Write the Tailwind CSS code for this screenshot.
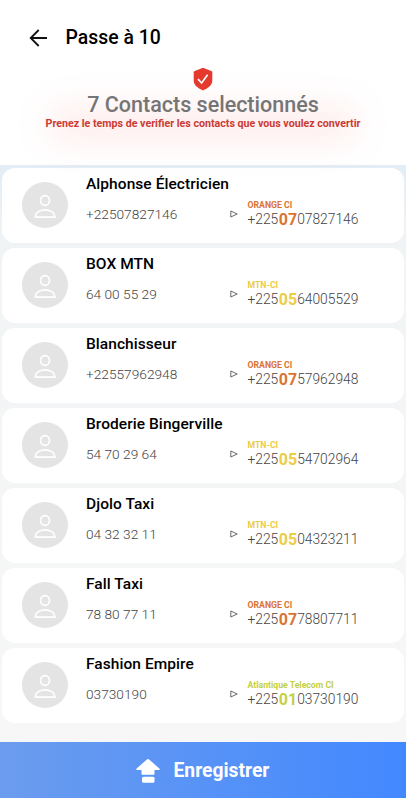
<!DOCTYPE html>
<html lang="fr">
<head>
<meta charset="utf-8">
<title>Passe à 10</title>
<script src="https://cdn.jsdelivr.net/npm/@tailwindcss/browser@4"></script>
</head>
<body class="bg-white">
<div class="w-[406px] h-[800px] overflow-hidden flex flex-col bg-white font-['Roboto',sans-serif]">
  <header class="h-[66px] shrink-0 flex items-center pl-[29px] pt-[9px]">
    <svg class="w-[19px] h-[18px]" viewBox="0 0 19 18" fill="none" stroke="#111" stroke-width="1.8"><path d="M18 9H2M9.7 1L1.7 9l8 8"/></svg>
    <h1 class="ml-[17.500px] text-[19.400px] leading-6 font-medium text-black whitespace-nowrap">Passe à 10</h1>
  </header>
  <section class="h-[99px] shrink-0 flex flex-col items-center">
    <svg class="mt-[1px] w-5 h-6 shrink-0" viewBox="0 0 20 24"><path fill="#e63a2e" d="M10 .8l8.3 3.1q1 .4 1 1.400v8.200c0 4.600-4.500 7.900-9.300 9.900C5.200 21.400.7 18.100.7 13.500V5.300q0-1 1-1.400z"/><path d="M5 12.200l3.600 3.800 6-8.200" fill="none" stroke="#fff" stroke-width="1.700"/></svg>
    <div class="relative mt-[2px] w-[316px] flex flex-col items-center">
      <div class="absolute left-[2px] right-[2px] top-[14px] h-[34px] rounded-[20px] bg-[#f44336]/10 blur-[17px]"></div>
      <h2 class="relative text-[21.500px] leading-6 font-medium text-[#757575] whitespace-nowrap">7 Contacts selectionnés</h2>
      <p class="relative text-[10.670px] leading-[13px] font-bold text-[#cb3a34] whitespace-nowrap">Prenez le temps de verifier les contacts que vous voulez convertir</p>
    </div>
  </section>
  <main id="list" class="h-[577px] shrink-0 bg-linear-to-b from-[#e3edf5] via-[#f1f4f5] via-15% to-[#f7f7f7] px-[2px] pt-[2.500px] flex flex-col gap-[4.500px]"></main>
  <button class="h-[56px] shrink-0 w-full bg-linear-to-r from-[#6b9cee] to-[#4288ff] flex items-center pl-[136px] text-white">
    <svg class="mt-[2px] w-6 h-6" viewBox="0 0 24 24" fill="#fff"><path d="M12 0Q12.700 0 13.400.7L23.600 9.800q.8 1.200-.6 1.200H18.500v3.800q0 1-1 1h-11q-1 0-1-1V11H1Q-.4 11 .4 9.800L10.600.7Q11.300 0 12 0z"/><rect x="6" y="17.700" width="12.500" height="6" rx="1.500"/></svg>
    <span class="mt-[1px] ml-[13.500px] text-[19.300px] leading-6 font-bold">Enregistrer</span>
  </button>
</div>
<script>
const orange = 'text-[#dc7430]', yellow = 'text-[#edcc45]', green = 'text-[#c4d044]';
const contacts = [
  ['Alphonse Électricien', '+22507827146', 'ORANGE CI', '07', '07827146', orange],
  ['BOX MTN', '64 00 55 29', 'MTN-CI', '05', '64005529', yellow],
  ['Blanchisseur', '+22557962948', 'ORANGE CI', '07', '57962948', orange],
  ['Broderie Bingerville', '54 70 29 64', 'MTN-CI', '05', '54702964', yellow],
  ['Djolo Taxi', '04 32 32 11', 'MTN-CI', '05', '04323211', yellow],
  ['Fall Taxi', '78 80 77 11', 'ORANGE CI', '07', '78807711', orange],
  ['Fashion Empire', '03730190', 'Atlantique Telecom CI', '01', '03730190', green],
];
document.getElementById('list').innerHTML = contacts.map(([name, old, op, prefix, rest, color]) => `
  <article class="h-[75.500px] shrink-0 bg-white rounded-[13px] flex pl-[20px]">
    <div class="mt-[14.500px] w-[46px] h-[46px] shrink-0 rounded-full bg-[#e4e4e4] flex items-center justify-center">
      <svg class="w-[24px] h-[26px]" viewBox="0 0 24 26" fill="none" stroke="#fff" stroke-width="1.700"><ellipse cx="12" cy="8.500" rx="4.500" ry="4.800"/><path d="M2 24.500C2.500 20.500 7 17.800 12 17.800S21.500 20.500 22 24.500q0 .7-.8.700H2.800Q2 25.200 2 24.500z"/></svg>
    </div>
    <div class="ml-[18px] flex-1">
      <h3 class="mt-[6px] text-[15.500px] leading-5 font-medium tracking-[0.060px] text-black whitespace-nowrap">${name}</h3>
      <div class="flex">
        <p class="mt-[10.500px] w-[144px] text-[13.700px] leading-5 font-light text-[#444] whitespace-nowrap">${old}</p>
        <svg class="mt-[16.500px] w-[8px] h-[8px] shrink-0" viewBox="0 0 8 8" fill="none" stroke="#444" stroke-width=".8"><path d="M.8 1L7.200 4 .8 7z"/></svg>
        <div class="ml-[9.500px] mt-[6.500px]">
          <p class="text-[8.700px] leading-[11px] font-bold whitespace-nowrap ${color}">${op}</p>
          <p class="-mt-[2px] flex items-center text-[13.800px] leading-[18px] font-light text-[#444] whitespace-nowrap"><span>+225</span><b class="ml-[0.500px] mt-[2px] text-[16px] font-bold ${color}">${prefix}</b><span>${rest}</span></p>
        </div>
      </div>
    </div>
  </article>`).join('');
</script>
</body>
</html>
